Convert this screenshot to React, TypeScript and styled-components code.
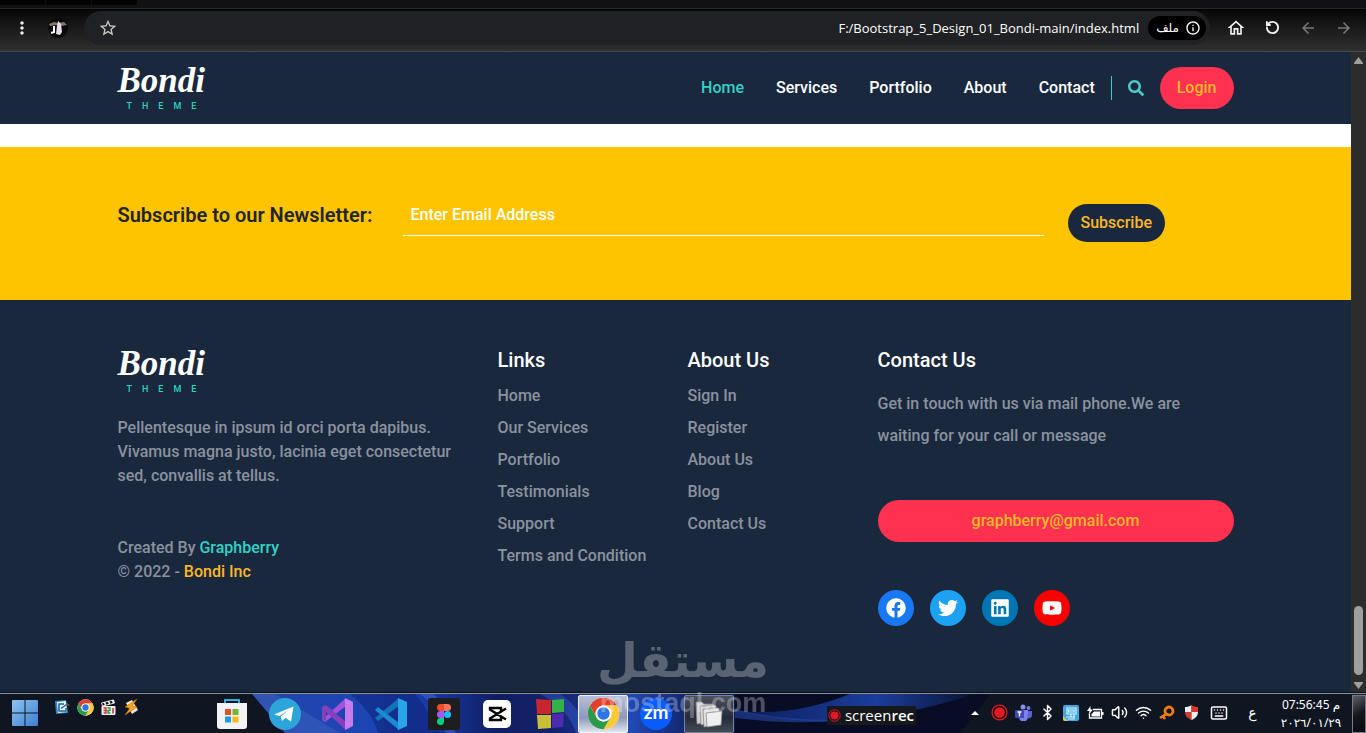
import React from "react";
import styled, { createGlobalStyle } from "styled-components";
import { FaFacebook, FaTwitter, FaLinkedin, FaYoutube, FaSearch } from "react-icons/fa";
import {
  MdMoreVert,
  MdStarBorder,
  MdInfoOutline,
  MdOutlineHome,
  MdArrowBack,
  MdArrowForward,
} from "react-icons/md";
import { Bluetooth, Wifi, Volume2, Keyboard, RotateCcw } from "lucide-react";

const color = {
  navy: "#1a283e",
  teal: "#31d2c6",
  yellow: "#ffc400",
  red: "#ff3150",
  muted: "#8a929e",
  amber: "#fdb827",
};

const GlobalStyle = createGlobalStyle`
  *, *::before, *::after { box-sizing: border-box; }
  body {
    margin: 0;
    background: #fff;
    font-family: Roboto, "Liberation Sans", sans-serif;
    font-size: 16px;
    font-weight: 500;
    line-height: 24px;
    overflow: hidden;
  }
  button, input { font: inherit; }
  a { text-decoration: none; color: inherit; }
  ul { list-style: none; margin: 0; padding: 0; }
  p, h2 { margin: 0; }
`;

const Screen = styled.div`
  display: flex;
  flex-direction: column;
  height: 100vh;
`;

/* ---------- browser window ---------- */

const TabStrip = styled.div`
  height: 10px;
  flex: none;
  display: flex;
  gap: 1px;
  background: #111113;
  border-bottom: 1px solid #000;
  box-shadow: inset 0 -1px 0 #29292a;
`;

const Tab = styled.span<{ $width: number }>`
  width: ${(p) => p.$width}px;
  height: 5px;
  background: #020202;
`;

const Toolbar = styled.div`
  height: 42px;
  flex: none;
  display: flex;
  align-items: center;
  gap: 16px;
  padding: 0 12px 6px;
  background: linear-gradient(#080808, #303030);
  border-bottom: 1px solid #45474a;
`;

const IconButton = styled.button<{ $dim?: boolean }>`
  display: flex;
  align-items: center;
  justify-content: center;
  width: 20px;
  height: 20px;
  flex: none;
  padding: 0;
  border: 0;
  background: none;
  color: ${(p) => (p.$dim ? "#77787a" : "#f1f1f1")};
  font-size: 20px;
`;

const Avatar = styled.svg`
  width: 20px;
  height: 20px;
  flex: none;
`;

const AddressBar = styled.div`
  flex: 1;
  display: flex;
  align-items: center;
  gap: 9px;
  height: 34px;
  padding: 0 4px 0 14px;
  border-radius: 17px;
  background: #202124;
  color: #c7c7c7;
`;

const AddressInput = styled.input`
  flex: 1;
  min-width: 0;
  padding: 0;
  border: 0;
  outline: 0;
  background: none;
  color: #fff;
  text-align: right;
  font: 400 13px/20px "Open Sans", "Noto Sans", sans-serif;
`;

const FileChip = styled.button`
  display: flex;
  align-items: center;
  gap: 6px;
  height: 24px;
  padding: 0 5px 0 8px;
  border: 0;
  border-radius: 12px;
  background: #000;
  color: #fff;
  font: 400 12px/16px "DejaVu Sans", sans-serif;
`;

const NavButtons = styled.div`
  display: flex;
  gap: 16px;
`;

const Viewport = styled.div`
  flex: 1;
  min-height: 0;
  display: flex;
`;

const Page = styled.div`
  flex: 1;
  min-width: 0;
  display: flex;
  flex-direction: column;
  overflow: hidden;
  background: #fff;
`;

const ScrollTrack = styled.div`
  width: 15px;
  flex: none;
  display: flex;
  flex-direction: column;
  align-items: center;
  justify-content: space-between;
  padding: 5px 0 4px;
  background: #2c2c2c;
`;

const ScrollArrow = styled.svg`
  width: 9px;
  height: 7px;
  fill: #9f9f9f;
`;

const ScrollEnd = styled.div`
  display: flex;
  flex-direction: column;
  align-items: center;
  gap: 7px;
`;

const ScrollThumb = styled.div`
  width: 9px;
  height: 69px;
  border-radius: 5px;
  background: #9f9f9f;
`;

/* ---------- web page ---------- */

const Container = styled.div`
  width: 100%;
  max-width: 1140px;
  margin: 0 auto;
  padding: 0 12px;
`;

const Navbar = styled.header`
  flex: none;
  background: ${color.navy};
`;

const NavRow = styled(Container)`
  display: flex;
  align-items: center;
  justify-content: space-between;
  height: 72px;
`;

const LogoLink = styled.a`
  display: flex;
  flex-direction: column;
  justify-content: space-between;
  width: 88px;
  height: 46px;
  color: #fff;
`;

const LogoName = styled.span`
  font: italic 700 35px/32px "Liberation Serif", serif;
`;

const LogoSub = styled.span`
  padding-left: 9px;
  color: ${color.teal};
  font-size: 9px;
  line-height: 10px;
  letter-spacing: 10px;
  white-space: nowrap;
`;

const Menu = styled.nav`
  display: flex;
  align-items: center;
`;

const MenuList = styled.ul`
  display: flex;
`;

const MenuLink = styled.a<{ $active?: boolean }>`
  padding: 8px 16px;
  color: ${(p) => (p.$active ? color.teal : "#fff")};
`;

const SearchButton = styled.button`
  display: flex;
  align-items: center;
  height: 24px;
  padding: 0 16px;
  border: 0;
  border-left: 1px solid ${color.teal};
  background: none;
  color: #4fc9c8;
  font-size: 16px;
`;

const PillButton = styled.button`
  height: 42px;
  padding: 0 17px;
  border: 0;
  border-radius: 21px;
  background: ${color.red};
  color: ${color.amber};
`;

const Newsletter = styled.section`
  flex: none;
  margin-top: 23px;
  background: ${color.yellow};
`;

const NewsletterForm = styled(Container).attrs({ as: "form" })`
  display: grid;
  grid-template-columns: repeat(12, 1fr);
  column-gap: 24px;
  align-items: center;
  padding-top: 45px;
  padding-bottom: 46px;
`;

const NewsletterLabel = styled.label`
  grid-column: span 3;
  color: #212529;
  font-size: 20px;
  font-weight: 600;
  white-space: nowrap;
  padding-bottom: 16px;
`;

const EmailInput = styled.input`
  grid-column: span 7;
  height: 44px;
  width: 100%;
  margin-bottom: 18px;
  padding: 2px 8px 0;
  border: 0;
  border-bottom: 1px solid #fff;
  background: none;
  outline: 0;
  &::placeholder { color: #fff; opacity: 1; }
`;

const SubscribeButton = styled.button`
  grid-column: span 2;
  justify-self: start;
  height: 38px;
  padding: 0 13px;
  border: 0;
  border-radius: 19px;
  background: ${color.navy};
  color: ${color.amber};
`;

const Footer = styled.footer`
  flex: 1;
  padding-top: 48px;
  background: ${color.navy};
  color: ${color.muted};
`;

const FooterGrid = styled(Container)`
  display: grid;
  grid-template-columns: repeat(12, 1fr);
  column-gap: 24px;
`;

const FooterColumn = styled.div<{ $span: number }>`
  grid-column: span ${(p) => p.$span};
`;

const About = styled.p`
  margin: 22px 0 48px;
`;

const Highlight = styled.a<{ $color: string }>`
  color: ${(p) => p.$color};
`;

const FooterTitle = styled.h2`
  margin-bottom: 8px;
  color: #fff;
  font-size: 20px;
  font-weight: 500;
  line-height: 24px;
`;

const FooterList = styled.ul`
  line-height: 32px;
  white-space: nowrap;
`;

const ContactText = styled.p`
  padding-top: 8px;
  margin-bottom: 48px;
  line-height: 32px;
`;

const MailLink = styled.a`
  display: block;
  border-radius: 21px;
  background: ${color.red};
  color: ${color.amber};
  line-height: 42px;
  text-align: center;
`;

const Socials = styled.div`
  display: flex;
  gap: 16px;
  margin-top: 48px;
`;

const SocialLink = styled.a<{ $bg: string }>`
  display: flex;
  align-items: center;
  justify-content: center;
  width: 36px;
  height: 36px;
  border-radius: 50%;
  background: ${(p) => p.$bg};
  color: #fff;
  font-size: 20px;
`;

/* ---------- taskbar ---------- */

const Taskbar = styled.div`
  position: relative;
  height: 40px;
  flex: none;
  display: flex;
  align-items: center;
  background: #0f1521;
  border-top: 1px solid #8b929c;
  box-shadow: 0 -1px 0 #0a0f18;
  color: #fff;
`;

const Wallpaper = styled.svg`
  position: absolute;
  inset: 0;
  width: 100%;
  height: 100%;
`;

const StartButton = styled.button`
  position: relative;
  width: 50px;
  height: 39px;
  padding: 0 0 2px;
  border: 0;
  background: none;
  svg { display: block; margin: 0 auto; }
`;

const QuickLaunch = styled.div`
  position: relative;
  display: flex;
  gap: 6px;
  width: 157px;
  padding: 0 0 12px 4px;
`;

const Apps = styled.div`
  position: relative;
  display: flex;
  flex: 1;
  gap: 3px;
`;

const AppButton = styled.button<{ $state?: "active" | "open" }>`
  display: flex;
  align-items: center;
  justify-content: center;
  width: 50px;
  height: 38px;
  padding: 0;
  border: 1px solid
    ${(p) => (p.$state === "active" ? "#f4f6fb" : p.$state ? "#7b8494" : "transparent")};
  border-radius: 2px;
  background: ${(p) =>
    p.$state === "active"
      ? "linear-gradient(#b9bfd8, #8f98bb 60%, #dfe3ee)"
      : p.$state
        ? "linear-gradient(#4c5260, #252b3a 60%, #444b58)"
        : "none"};
`;

const Recorder = styled.div`
  position: relative;
  display: flex;
  align-items: center;
  gap: 4px;
  height: 19px;
  margin: 3px 47px 0 0;
  padding: 0 2px 0 1px;
  background: #17181c;
  font: 400 15px/18px "Open Sans", sans-serif;
  b { font-weight: 600; }
`;

const Tray = styled.div`
  position: relative;
  display: flex;
  align-items: center;
`;

const TrayItem = styled.span<{ $width?: number }>`
  display: flex;
  align-items: center;
  justify-content: center;
  width: ${(p) => p.$width ?? 24}px;
  padding-bottom: 2px;
  font: 400 14px/18px "DejaVu Sans", sans-serif;
`;

const Clock = styled.div`
  width: 82px;
  text-align: center;
  font: 400 12px/18px "Noto Sans", "DejaVu Sans", sans-serif;
  white-space: nowrap;
`;

const ShowDesktop = styled.button`
  position: relative;
  width: 14px;
  height: 38px;
  padding: 0;
  border: 1px solid #777c85;
  background: linear-gradient(150deg, #5d6068, #14171d 50%, #08090c);
`;

const Watermark = styled.div`
  position: fixed;
  left: 50%;
  bottom: 14px;
  width: 164px;
  margin-left: -82px;
  display: flex;
  flex-direction: column;
  align-items: center;
  color: #fff;
  opacity: 0.28;
  pointer-events: none;
  white-space: nowrap;
`;

const WatermarkArabic = styled.span`
  font: 700 47px/52px "DejaVu Sans", sans-serif;
`;

const WatermarkLatin = styled.span`
  font: 700 27px/32px "Liberation Sans", sans-serif;
`;

/* ---------- drawings ---------- */

const ChromeIcon = ({ size }: { size: number }) => (
  <svg width={size} height={size} viewBox="0 0 48 48">
    <circle cx="24" cy="24" r="23" fill="#fff" />
    <path d="M4.1 12.5A23 23 0 0 1 43.9 12.5H24A11.5 11.5 0 0 0 14 29.7Z" fill="#e2402f" />
    <path d="M43.9 12.5A23 23 0 0 1 24 47L34 29.7A11.5 11.5 0 0 0 24 12.5Z" fill="#fcc934" />
    <path d="M24 47A23 23 0 0 1 4.1 12.5L14 29.7A11.5 11.5 0 0 0 34 29.7Z" fill="#2a9a48" />
    <circle cx="24" cy="24" r="11.5" fill="#fff" />
    <circle cx="24" cy="24" r="9" fill="#2f76e0" />
  </svg>
);

const RecordDot = ({ size }: { size: number }) => (
  <svg width={size} height={size} viewBox="0 0 16 16">
    <circle cx="8" cy="8" r="7" fill="#260a0d" stroke="#d3202c" strokeWidth="1.2" />
    <circle cx="8" cy="8" r="5" fill="#e01b26" />
  </svg>
);

const StartIcon = () => (
  <svg width="26" height="26" viewBox="0 0 26 26">
    <defs>
      <linearGradient id="start" x1="0" y1="0" x2="1" y2="1">
        <stop offset="0" stopColor="#8fc3f3" />
        <stop offset="1" stopColor="#3b7fd0" />
      </linearGradient>
    </defs>
    <path d="M1 0h11.5v12.5H0V1a1 1 0 0 1 1-1zM13.5 0H25a1 1 0 0 1 1 1v11.5H13.5zM0 13.5h12.5V26H1a1 1 0 0 1-1-1zM13.5 13.5H26V25a1 1 0 0 1-1 1H13.5z" fill="url(#start)" />
  </svg>
);

const NoteIcon = () => (
  <svg width="17" height="17" viewBox="0 0 17 17">
    <path d="M1 2l11-1 2 13-12 1z" fill="#2f86c4" />
    <path d="M3 3l9-1 1 11-9 1z" fill="#e6f3fb" />
    <path d="M10 5H5v7h7V9M7 9.5l7-5" fill="none" stroke="#1d5f9b" strokeWidth="1.5" />
    <path d="M13 5l3 1-2 1z" fill="#d0532a" />
  </svg>
);

const ClapperIcon = () => (
  <svg width="17" height="17" viewBox="0 0 16 17">
    <path d="M1 4l12-3 1 3-12 3z" fill="#111" stroke="#e8e8e8" />
    <path d="M4 3l1 3M8 2l1 3M12 1l1 3" stroke="#fff" strokeWidth="1.5" />
    <rect x="1" y="7" width="14" height="9" rx="1" fill="#f2f2f2" />
    <path d="M3 9h2.5v5H3M3 11.5h2.500" fill="none" stroke="#d2302c" strokeWidth="1.4" />
    <path d="M7 9h2.500v2.500H7.500V14H10" fill="none" stroke="#2c9a48" strokeWidth="1.4" />
    <path d="M12.500 9v5.500" stroke="#d2302c" strokeWidth="1.6" />
  </svg>
);

const BoltIcon = () => (
  <svg width="17" height="17" viewBox="0 0 17 17">
    <path d="M3 4l6-3 6 10-6 4z" fill="#efe9d8" />
    <path d="M14 0L2 8l5 1-5 7 12-8-5-1z" fill="#f9a51b" stroke="#c96c08" strokeWidth=".6" />
  </svg>
);

const StoreIcon = () => (
  <svg width="32" height="32" viewBox="0 0 32 32">
    <path d="M9 6V2h14v4" fill="none" stroke="#35aee0" strokeWidth="2" />
    <path d="M1 5h30v23a3 3 0 0 1-3 3H4a3 3 0 0 1-3-3z" fill="#f2f3f5" />
    <path d="M9 11h6v6H9z" fill="#e3512b" />
    <path d="M16.500 11h6v6h-6z" fill="#77b52c" />
    <path d="M9 18.500h6v6H9z" fill="#1b9bdc" />
    <path d="M16.500 18.500h6v6h-6z" fill="#f8b71c" />
  </svg>
);

const TelegramIcon = () => (
  <svg width="32" height="32" viewBox="0 0 32 32">
    <circle cx="16" cy="16" r="16" fill="#2da5db" />
    <path d="M5 16.500L24.500 8.500 22 23.500 16.500 19.800 13 23 11.800 18.500 20 12 10.500 18z" fill="#fff" />
  </svg>
);

const VisualStudioIcon = () => (
  <svg width="32" height="32" viewBox="0 0 32 32">
    <path d="M0 22l3 2L24 8V0L4 18V10L0 9z" fill="#a352db" />
    <path d="M0 9l4-2 20 17v8L4 14v9l-4-1z" fill="#8240bd" />
    <path d="M23 0l8 4v24l-8 4z" fill="#c87bea" />
  </svg>
);

const VsCodeIcon = () => (
  <svg width="32" height="32" viewBox="0 0 32 32">
    <path d="M0 20l3 3L24 8V0z" fill="#1473b8" />
    <path d="M0 12l3-3 21 16v7z" fill="#1a8ad4" />
    <path d="M23 0l9 4v24l-9 4z" fill="#2ba5ea" />
  </svg>
);

const FigmaIcon = () => (
  <svg width="32" height="32" viewBox="0 0 32 32">
    <rect width="32" height="32" rx="2" fill="#1e1e20" />
    <path d="M16 6h-3.5a3.5 3.5 0 0 0 0 7H16z" fill="#f04e23" />
    <path d="M16 6h3.5a3.5 3.5 0 0 1 0 7H16z" fill="#ff7262" />
    <path d="M16 13h-3.5a3.5 3.5 0 0 0 0 7H16z" fill="#a259ff" />
    <circle cx="19.5" cy="16.5" r="3.5" fill="#1abcfe" />
    <path d="M16 20h-3.5a3.5 3.5 0 1 0 3.5 3.500z" fill="#0acf83" />
  </svg>
);

const CapCutIcon = () => (
  <svg width="28" height="28" viewBox="0 0 28 28">
    <rect width="28" height="28" rx="5" fill="#fff" />
    <path d="M23 8.500L7 18.500V20H18V17M23 19.500L7 9.500V8H18V11" fill="none" stroke="#050505" strokeWidth="2.4" />
  </svg>
);

const SquaresIcon = () => (
  <svg width="30" height="32" viewBox="0 0 30 32">
    <path d="M1 1l15 1v14H2z" fill="#c8262d" />
    <path d="M17 2l12-1v13l-12 1z" fill="#35b148" />
    <path d="M2 17h14v13L3 31z" fill="#c9bf35" />
    <path d="M17 16l12-1-1 14-11 1z" fill="#4b2bb0" />
  </svg>
);

const ZoomIcon = () => (
  <svg width="32" height="32" viewBox="0 0 32 32">
    <circle cx="16" cy="16" r="16" fill="#0b5cff" />
    <text x="16" y="21" textAnchor="middle" fill="#fff" fontFamily="Lato, sans-serif" fontSize="19" fontWeight="700">
      zm
    </text>
  </svg>
);

const FoldersIcon = () => (
  <svg width="30" height="28" viewBox="0 0 30 28">
    <g stroke="#8a8a8a" strokeWidth=".8">
      <path d="M2 2h6l2 2h9v17L3 24z" fill="#cfcfcf" />
      <path d="M6 6h5l2-1h7l2 1v16L7 25z" fill="#d8d8d8" />
      <path d="M9 9l6 0 2-1h8v16L10 27z" fill="#e2e2e2" />
      <path d="M12 13l16-2-1 14-14 2z" fill="#efefef" />
    </g>
  </svg>
);

const TeamsIcon = () => (
  <svg width="17" height="17" viewBox="0 0 17 17">
    <circle cx="8" cy="3" r="2.5" fill="#8a8fee" />
    <circle cx="13.5" cy="4" r="2" fill="#7277dd" />
    <path d="M4 6h9v7a4 4 0 0 1-9 0z" fill="#7c82ea" />
    <path d="M13 7h4v5a3 3 0 0 1-4 2z" fill="#5d62c9" />
    <rect x="0" y="6" width="9" height="8" rx="1" fill="#4347b0" />
    <path d="M2.5 8h4M4.5 8v4.5" stroke="#fff" strokeWidth="1.3" />
  </svg>
);

const MonitorIcon = () => (
  <svg width="16" height="16" viewBox="0 0 16 16">
    <rect width="16" height="16" rx="2" fill="#43a8e0" />
    <path d="M4 3h9v6H4zM3 12h9M8 9v3M5.500 5H11v2H5.500zM11 9v5H5" fill="none" stroke="#d8f1ff" strokeWidth="1.2" />
    <path d="M0 11l5 5H2a2 2 0 0 1-2-2z" fill="#c8cf68" />
  </svg>
);

const BatteryIcon = () => (
  <svg width="17" height="14" viewBox="0 0 17 14" fill="none" stroke="#fff">
    <path d="M6 3.500H14.500V12H2.500V8" strokeWidth="1.300" />
    <path d="M7 5.500H13V10.500H4.500V8z" fill="#fff" stroke="none" />
    <path d="M15 6h1.500v3H15z" fill="#fff" stroke="none" />
    <path d="M3.500 0L0 5h2.500L1.500 9 6 3.500H3.500z" fill="#fff" stroke="none" />
  </svg>
);

const KeyIcon = () => (
  <svg width="16" height="16" viewBox="0 0 16 16" fill="none" stroke="#f07c12">
    <circle cx="10" cy="6" r="4" strokeWidth="2.8" />
    <path d="M7 9l-6 4M4 11l2 3" strokeWidth="2.6" />
  </svg>
);

const ShieldIcon = () => (
  <svg width="15" height="15" viewBox="0 0 15 15">
    <path d="M7.5 0C6 1.5 3 2 1 2v5h6.5z" fill="#f1eded" />
    <path d="M7.5 0C9 1.5 12 2 14 2v5H7.5z" fill="#d8392b" />
    <path d="M1 7c0 4 3 6.5 6.5 8V7z" fill="#d8392b" />
    <path d="M14 7c0 4-3 6.5-6.5 8V7z" fill="#f1eded" />
  </svg>
);

const Logo = () => (
  <LogoLink href="#home">
    <LogoName>Bondi</LogoName>
    <LogoSub>THEME</LogoSub>
  </LogoLink>
);

/* ---------- data ---------- */

const menu = ["Home", "Services", "Portfolio", "About", "Contact"];

const footerLists = [
  {
    title: "Links",
    items: ["Home", "Our Services", "Portfolio", "Testimonials", "Support", "Terms and Condition"],
  },
  { title: "About Us", items: ["Sign In", "Register", "About Us", "Blog", "Contact Us"] },
];

const socials = [
  { name: "Facebook", bg: "#1877f2", icon: <FaFacebook /> },
  { name: "Twitter", bg: "#1da1f2", icon: <FaTwitter /> },
  { name: "LinkedIn", bg: "#0077b5", icon: <FaLinkedin /> },
  { name: "YouTube", bg: "#ff0000", icon: <FaYoutube /> },
];

const apps: { name: string; icon: React.ReactNode; state?: "active" | "open" }[] = [
  { name: "Store", icon: <StoreIcon /> },
  { name: "Telegram", icon: <TelegramIcon /> },
  { name: "Visual Studio", icon: <VisualStudioIcon /> },
  { name: "VS Code", icon: <VsCodeIcon /> },
  { name: "Figma", icon: <FigmaIcon /> },
  { name: "CapCut", icon: <CapCutIcon /> },
  { name: "Windows", icon: <SquaresIcon /> },
  { name: "Chrome", icon: <ChromeIcon size={33} />, state: "active" },
  { name: "Zoom", icon: <ZoomIcon /> },
  { name: "Files", icon: <FoldersIcon />, state: "open" },
];

export default function App() {
  return (
    <Screen>
      <GlobalStyle />
      <TabStrip>
        <Tab $width={45} />
        <Tab $width={45} />
        <Tab $width={45} />
      </TabStrip>
      <Toolbar>
        <IconButton aria-label="Menu"><MdMoreVert /></IconButton>
        <Avatar viewBox="0 0 20 20">
          <circle cx="10" cy="10" r="10" fill="#0b0a0c" />
          <path d="M1 6l5-2 4 1 6-1 3 3-6 1-5-1-6 1z" fill="#87766f" />
          <path d="M10 3l3 3 1 8-2 3-4-1 1-8z" fill="#e9dce6" />
          <path d="M6 8v6l-3 1" fill="none" stroke="#fff" strokeWidth="2" />
        </Avatar>
        <AddressBar>
          <IconButton aria-label="Bookmark"><MdStarBorder color="#c7c7c7" /></IconButton>
          <AddressInput
            aria-label="Address"
            readOnly
            value="F:/Bootstrap_5_Design_01_Bondi-main/index.html"
          />
          <FileChip>
            ملف
            <MdInfoOutline size={16} />
          </FileChip>
        </AddressBar>
        <NavButtons>
          <IconButton aria-label="Home"><MdOutlineHome /></IconButton>
          <IconButton aria-label="Reload"><RotateCcw size={15} strokeWidth={3} /></IconButton>
          <IconButton aria-label="Back" $dim><MdArrowBack size={18} /></IconButton>
          <IconButton aria-label="Forward" $dim><MdArrowForward size={18} /></IconButton>
        </NavButtons>
      </Toolbar>

      <Viewport>
        <Page>
          <Navbar>
            <NavRow>
              <Logo />
              <Menu>
                <MenuList>
                  {menu.map((item, i) => (
                    <li key={item}>
                      <MenuLink href={`#${item.toLowerCase()}`} $active={i === 0}>{item}</MenuLink>
                    </li>
                  ))}
                </MenuList>
                <SearchButton aria-label="Search"><FaSearch /></SearchButton>
                <PillButton>Login</PillButton>
              </Menu>
            </NavRow>
          </Navbar>

          <Newsletter>
            <NewsletterForm>
              <NewsletterLabel htmlFor="email">Subscribe to our Newsletter:</NewsletterLabel>
              <EmailInput id="email" type="email" placeholder="Enter Email Address" />
              <SubscribeButton type="button">Subscribe</SubscribeButton>
            </NewsletterForm>
          </Newsletter>

          <Footer>
            <FooterGrid>
              <FooterColumn $span={4}>
                <Logo />
                <About>
                  Pellentesque in ipsum id orci porta dapibus. Vivamus magna justo, lacinia eget
                  consectetur sed, convallis at tellus.
                </About>
                <p>
                  Created By <Highlight href="#graphberry" $color={color.teal}>Graphberry</Highlight>
                </p>
                <p>
                  © 2022 - <Highlight href="#bondi" $color={color.amber}>Bondi Inc</Highlight>
                </p>
              </FooterColumn>
              {footerLists.map((list) => (
                <FooterColumn key={list.title} $span={2}>
                  <FooterTitle>{list.title}</FooterTitle>
                  <FooterList>
                    {list.items.map((item) => (
                      <li key={item}><a href="#footer">{item}</a></li>
                    ))}
                  </FooterList>
                </FooterColumn>
              ))}
              <FooterColumn $span={4}>
                <FooterTitle>Contact Us</FooterTitle>
                <ContactText>
                  Get in touch with us via mail phone.We are waiting for your call or message
                </ContactText>
                <MailLink href="mailto:graphberry@gmail.com">graphberry@gmail.com</MailLink>
                <Socials>
                  {socials.map((s) => (
                    <SocialLink key={s.name} href="#social" aria-label={s.name} $bg={s.bg}>
                      {s.icon}
                    </SocialLink>
                  ))}
                </Socials>
              </FooterColumn>
            </FooterGrid>
          </Footer>
        </Page>
        <ScrollTrack aria-hidden>
          <ScrollArrow viewBox="0 0 9 7"><path d="M4.5 0L9 6v1H0V6z" /></ScrollArrow>
          <ScrollEnd>
            <ScrollThumb />
            <ScrollArrow viewBox="0 0 9 7"><path d="M4.5 7L9 1V0H0v1z" /></ScrollArrow>
          </ScrollEnd>
        </ScrollTrack>
      </Viewport>

      <Taskbar>
        <Wallpaper viewBox="0 0 1366 39" preserveAspectRatio="none" aria-hidden>
          <defs>
            <linearGradient id="sky">
              <stop offset="0" stopColor="#2444a8" />
              <stop offset=".15" stopColor="#1c45b4" />
              <stop offset=".24" stopColor="#183aa6" />
              <stop offset=".34" stopColor="#101d60" />
              <stop offset=".42" stopColor="#14236e" />
              <stop offset=".52" stopColor="#2148b4" />
              <stop offset=".62" stopColor="#0e1c58" />
              <stop offset="1" stopColor="#0a1029" />
            </linearGradient>
            <linearGradient id="ray">
              <stop offset="0" stopColor="#0c1c58" />
              <stop offset=".6" stopColor="#1b3d9c" />
              <stop offset="1" stopColor="#0b1436" />
            </linearGradient>
          </defs>
          <path d="M252 0H980L955 39H285z" fill="url(#sky)" />
          <path d="M252 0H275L340 39H285z" fill="#4d6fc8" opacity=".35" />
          <path d="M350 0C365 12 375 26 378 39H440C430 20 422 8 415 0z" fill="#0c1f70" opacity=".5" />
          <path d="M420 0H434C448 15 453 28 456 39H446C442 24 432 8 420 0z" fill="#5f7fe0" opacity=".35" />
          <path d="M540 0C560 10 572 25 576 39H590C584 20 570 6 560 0z" fill="#3357c8" opacity=".5" />
          <path d="M735 0H990L960 39H735z" fill="#080d25" />
          <path d="M735 17C780 21 815 14 850 0H970L965 3C930 14 880 24 840 27C800 28 770 24 735 17z" fill="url(#ray)" />
          <path d="M735 15C770 24 800 26 850 26C800 30 770 28 735 24z" fill="#2348a8" opacity=".6" />
        </Wallpaper>
        <StartButton aria-label="Start"><StartIcon /></StartButton>
        <QuickLaunch>
          <NoteIcon />
          <ChromeIcon size={17} />
          <ClapperIcon />
          <BoltIcon />
        </QuickLaunch>
        <Apps>
          {apps.map((app) => (
            <AppButton key={app.name} aria-label={app.name} $state={app.state}>
              {app.icon}
            </AppButton>
          ))}
        </Apps>
        <Recorder>
          <RecordDot size={13} />
          <span>screen<b>rec</b></span>
        </Recorder>
        <Tray>
          <TrayItem>
            <svg width="8" height="4" viewBox="0 0 8 4"><path d="M4 0l4 4H0z" fill="#fff" /></svg>
          </TrayItem>
          <TrayItem><RecordDot size={17} /></TrayItem>
          <TrayItem><TeamsIcon /></TrayItem>
          <TrayItem><Bluetooth size={17} strokeWidth={2} /></TrayItem>
          <TrayItem><MonitorIcon /></TrayItem>
          <TrayItem><BatteryIcon /></TrayItem>
          <TrayItem><Volume2 size={17} /></TrayItem>
          <TrayItem><Wifi size={17} /></TrayItem>
          <TrayItem><KeyIcon /></TrayItem>
          <TrayItem><ShieldIcon /></TrayItem>
          <TrayItem $width={32}><Keyboard size={18} /></TrayItem>
          <TrayItem $width={35}>ع</TrayItem>
          <Clock>
            <div>07:56:45 م</div>
            <div>٢٠٢٦/٠١/٢٩</div>
          </Clock>
        </Tray>
        <ShowDesktop aria-label="Show desktop" />
      </Taskbar>

      <Watermark>
        <WatermarkArabic>مستقل</WatermarkArabic>
        <WatermarkLatin>mostaql.com</WatermarkLatin>
      </Watermark>
    </Screen>
  );
}
